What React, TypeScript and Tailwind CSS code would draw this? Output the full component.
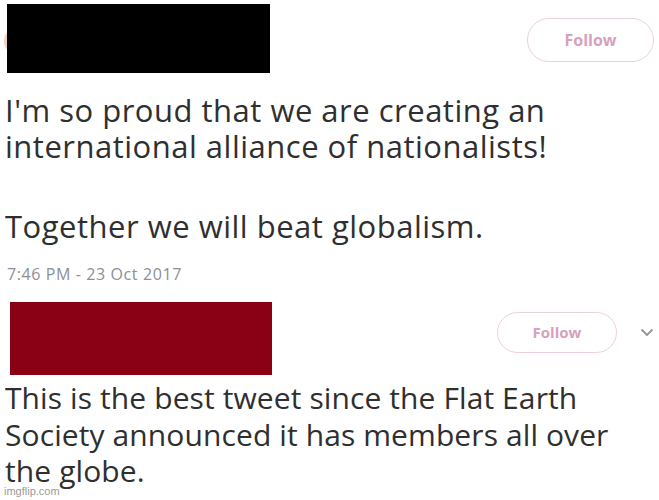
import React from "react";

function FollowBtn({ cls, textCls }: { cls: string; textCls: string }) {
  return (
    <div
      className={`${cls} rounded-full border-[1.5px] border-[#ebd0df] flex items-center justify-center font-bold text-[#d7a0bd]`}
      style={{ fontFamily: "'Open Sans', sans-serif" }}
    >
      <span className={textCls}>Follow</span>
    </div>
  );
}

export default function App() {
  return (
    <div
      className="w-[659px] h-[500px] bg-white overflow-hidden relative text-[#2f2f2f]"
      style={{ fontFamily: "'Open Sans', 'Noto Sans', sans-serif" }}
    >
      {/* tweet 1 header */}
      <div className="flex items-start h-[92px]">
        <div className="relative mt-[4px] ml-[7px] w-[263px] h-[69px]">
          <div className="absolute -left-[3px] top-[22px] w-[30px] h-[30px] rounded-full bg-[#f4d2c2]" />
          <div className="absolute inset-0 bg-black" />
        </div>
        <div className="ml-auto mr-[5px] mt-[18px]">
          <FollowBtn cls="w-[127px] h-[44px]" textCls="text-[16px]" />
        </div>
      </div>
      {/* tweet 1 text */}
      <div className="px-[5px] text-[31px] leading-[36px] tracking-[0.5px]">
        <p>I'm so proud that we are creating an</p>
        <p>international alliance of nationalists!</p>
        <p className="mt-[44px]">Together we will beat globalism.</p>
      </div>
      <div className="px-[7px] mt-[20px] text-[16px] leading-[20px] text-[#8b9096] tracking-[0.6px]">
        7:46 PM - 23 Oct 2017
      </div>
      {/* tweet 2 header */}
      <div className="flex items-start mt-[18px] h-[78px]">
        <div className="ml-[10px] w-[262px] h-[73px] bg-[#8a0015]" />
        <div className="ml-auto mt-[10px] flex items-center">
          <FollowBtn cls="w-[120px] h-[41px]" textCls="text-[15px]" />
          <svg className="ml-[23px] mr-[5px]" width="14" height="9" viewBox="0 0 14 9">
            <path d="M1.5 1.5 L7 7 L12.5 1.5" fill="none" stroke="#8f959b" strokeWidth="1.8" />
          </svg>
        </div>
      </div>
      {/* tweet 2 text */}
      <div className="px-[5px] text-[30px] leading-[36.5px] tracking-[0.1px]">
        <p>This is the best tweet since the Flat Earth</p>
        <p>Society announced it has members all over</p>
        <p>the globe.</p>
      </div>
      <div
        className="absolute left-[4px] bottom-[3px] text-[11px] leading-[12px] text-[#9a9a9a]"
        style={{ fontFamily: "'Liberation Sans', Arial, sans-serif" }}
      >
        imgflip.com
      </div>
    </div>
  );
}
